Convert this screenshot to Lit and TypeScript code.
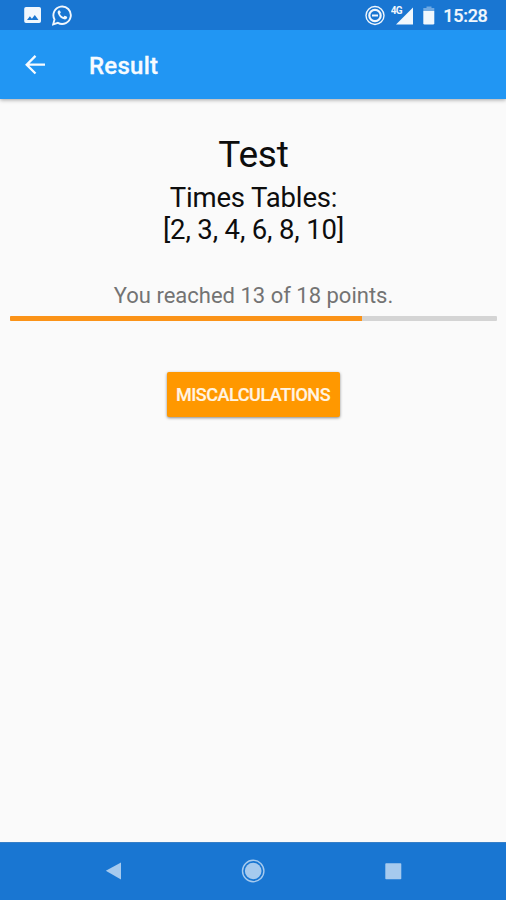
import { LitElement, html, css } from "lit";
import { customElement, property } from "lit/decorators.js";

@customElement("status-bar")
class StatusBar extends LitElement {
  static styles = css`
    :host { display: flex; justify-content: space-between; height: 30px; background: #1976d2; color: #f1f7fd; }
    svg { display: block; fill: currentColor; }
    .side { display: flex; align-items: center; }
    .left { padding-left: 24px; gap: 10px; }
    .right { padding-right: 18.500px; }
    .signal { margin-left: 6px; }
    .battery { margin-left: 9px; }
    .time { margin-left: 8.500px; font-size: 18px; font-weight: 500; line-height: 30px; padding-top: 2px; letter-spacing: -0.300px; -webkit-text-stroke: 0.200px currentColor; }
  `;
  render() {
    return html`
      <div class="side left">
        <svg width="18" height="30" viewBox="0 0 18 30"><path fill-rule="evenodd" d="M2 7h13.200q1.800 0 1.800 1.800v12.400q0 1.800-1.800 1.800H2q-1.800 0-1.800-1.800V8.800Q.2 7 2 7ZM3 20h11.500l-3.700-5-2.900 3.700-2-2.400Z"/></svg>
        <svg width="20" height="30" viewBox="0 0 20 30"><path d="m1.200 24.300 1.300-4.900a8.700 8.700 0 1 1 3.400 3.400Z" fill="none" stroke="currentColor" stroke-width="1.900"/><path d="M7 10.200c-1.200.6-1.600 1.700-1.200 3 .9 3 3.300 5.300 6.300 6.100 1.500.4 3.100-.6 3.100-2.100 0-.5-2.200-1.600-2.600-1.500-.4.100-.8 1.200-1.200 1.200-1.400-.4-2.900-1.900-3.500-3.200 0-.4.900-.9.900-1.300 0-.4-.8-2.200-1.800-2.200Z"/></svg>
      </div>
      <div class="side right">
        <svg width="20" height="30" viewBox="0 0 20 30"><g fill="none" stroke="currentColor"><circle cx="10" cy="15.500" r="9" stroke-width="1.400"/><circle cx="10" cy="15.500" r="5.700" stroke-width="2.200"/></g><path d="M7 14.500h6v2H7z"/></svg>
        <svg class="signal" width="23" height="30" viewBox="0 0 23 30"><path d="M22 7.500v17H5Z"/><text x="-.3" y="14" font-size="10" font-weight="700" letter-spacing="-.7" stroke="#1976d2" stroke-width="1" paint-order="stroke">4G</text></svg>
        <svg class="battery" width="12" height="30" viewBox="0 0 12 30"><path d="M3.500 6.500h5V8h2.800v3H.3V8h3.200Z" opacity=".4"/><path d="M.3 11h11v12.200q0 1.300-1.300 1.300H1.600Q.3 24.500.3 23.200Z"/></svg>
        <span class="time">15:28</span>
      </div>`;
  }
}

@customElement("title-bar")
class TitleBar extends LitElement {
  static styles = css`
    :host { display: flex; align-items: center; height: 69px; background: #2196f3; padding-left: 25px; box-sizing: border-box; box-shadow: 0 1px 4px rgba(0, 0, 0, 0.35); clip-path: inset(0 0 -8px 0); }
    svg { display: block; margin-right: 44px; }
    .title { font-size: 24px; font-weight: 500; line-height: 30px; padding-top: 3px; color: #f6fbff; letter-spacing: 0.250px; -webkit-text-stroke: 0.300px currentColor; }
  `;
  render() {
    return html`
      <svg width="20" height="20" viewBox="0 0 20 20" fill="none" stroke="#f6fbff" stroke-width="2.300"><path d="M20 9.700H2.500M10.500.9 1.700 9.700l8.800 8.800"/></svg>
      <span class="title">Result</span>`;
  }
}

@customElement("score-bar")
class ScoreBar extends LitElement {
  @property({ type: Number }) points = 0;
  @property({ type: Number }) total = 1;
  static styles = css`
    :host { display: block; align-self: stretch; text-align: center; }
    .label { font-size: 22px; line-height: 26px; color: #737373; padding-left: 1px; }
    .track { height: 5px; margin: 7px 9px 0 10px; background: #d4d4d4; border-radius: 1px; overflow: hidden; }
    .fill { height: 100%; background: #fb9318; }
  `;
  render() {
    return html`
      <div class="label">You reached ${this.points} of ${this.total} points.</div>
      <div class="track"><div class="fill" style="width:${(this.points / this.total) * 100}%"></div></div>`;
  }
}

@customElement("nav-bar")
class NavBar extends LitElement {
  static styles = css`
    :host { display: flex; align-items: center; justify-content: space-between; height: 58px; box-sizing: border-box; padding: 0 101px 2px; background: #1976d2; border-top: 1px solid #367fc8; }
    svg { display: block; fill: #a6caee; }
  `;
  render() {
    return html`
      <svg width="24" height="24" viewBox="0 0 24 24"><path d="M4.800 11.800 20 3.600v16.800Z"/></svg>
      <svg width="24" height="24" viewBox="0 0 24 24"><circle cx="12.200" cy="12" r="8.300"/><circle cx="12.200" cy="12" r="10.700" fill="none" stroke="#a6caee" stroke-width="1.400"/></svg>
      <svg width="24" height="24" viewBox="0 0 24 24"><rect x="4.300" y="4.200" width="16" height="16" rx=".8"/></svg>`;
  }
}

@customElement("app-root")
class AppRoot extends LitElement {
  static styles = css`
    :host { display: flex; flex-direction: column; height: 100vh; background: #fafafa; color: #0d0d0d; font-family: Roboto, "Liberation Sans", sans-serif; }
    .content { flex: 1; display: flex; flex-direction: column; align-items: center; padding-top: 34px; text-align: center; }
    .name { font-size: 37px; line-height: 44px; letter-spacing: -0.200px; padding-left: 1px; }
    .tables { font-size: 27.500px; line-height: 32px; margin-top: 5px; letter-spacing: -0.150px; padding-left: 1px; }
    .score { margin-top: 37px; }
    .action { margin-top: 51px; width: 173px; height: 45px; border: 0; border-radius: 2px; padding: 0; background: #ff9800; color: #fff4e3; font: 500 18px/24px Roboto, "Liberation Sans", sans-serif; letter-spacing: -0.450px; -webkit-text-stroke: 0.200px currentColor; box-shadow: 0 1px 3px rgba(0, 0, 0, 0.45); white-space: nowrap; }
  `;
  render() {
    return html`
      <status-bar></status-bar>
      <title-bar></title-bar>
      <main class="content">
        <div class="name">Test</div>
        <div class="tables">Times Tables:<br />[2, 3, 4, 6, 8, 10]</div>
        <score-bar class="score" points="13" total="18"></score-bar>
        <button class="action">MISCALCULATIONS</button>
      </main>
      <nav-bar></nav-bar>`;
  }
}
